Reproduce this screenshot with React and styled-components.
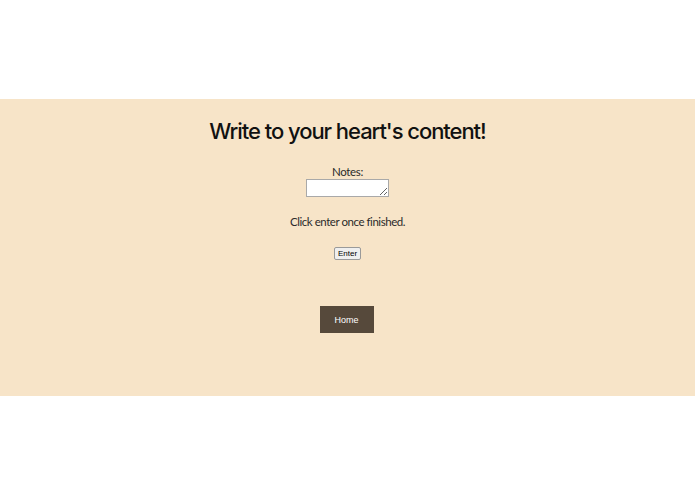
import React from "react";
import styled, { createGlobalStyle } from "styled-components";

const Global = createGlobalStyle`
  html, body { margin: 0; padding: 0; background: #ffffff; }
  body { font-family: "Lato", "Open Sans", sans-serif; }
`;

const Page = styled.div`
  padding-top: 99px;
`;

const Band = styled.section`
  background: #f7e4c8;
  height: 297px;
  display: flex;
  flex-direction: column;
  align-items: center;
  color: #1a1a1a;
`;

const Title = styled.h1`
  margin: 17px 0 0;
  font-family: "Inter", "Lato", sans-serif;
  font-weight: 500;
  font-size: 22px;
  letter-spacing: -1.05px;
  line-height: 30px;
  color: #111;
`;

const Label = styled.label`
  margin-top: 19px;
  font-size: 11.5px;
  letter-spacing: -0.3px;
  line-height: 14px;
  color: #2a2a2a;
`;

const Area = styled.textarea`
  margin-top: 0;
  width: 79px;
  height: 14px;
  padding: 1px;
  border: 1px solid #a9a9a9;
  background: #fff;
  font-size: 11px;
`;

const Hint = styled.p`
  margin: 18px 0 0;
  font-size: 11.5px;
  letter-spacing: -0.45px;
  line-height: 14px;
  color: #2a2a2a;
`;

const SmallButton = styled.button`
  margin-top: 18px;
  font-family: "Liberation Sans", Arial, sans-serif;
  font-size: 8px;
  padding: 1px 3px;
  border: 1px solid #9a9a9a;
  border-radius: 2px;
  background: #efefef;
  color: #000;
`;

const HomeButton = styled.button`
  margin-top: 46px;
  margin-left: -2px;
  width: 54px;
  height: 27px;
  background: #56493b;
  color: #fff;
  border: none;
  font-family: "Liberation Sans", Arial, sans-serif;
  font-size: 9px;
`;

export default function App() {
  return (
    <>
      <Global />
      <Page>
        <Band>
          <Title>Write to your heart's content!</Title>
          <Label htmlFor="notes">Notes:</Label>
          <Area id="notes" />
          <Hint>Click enter once finished.</Hint>
          <SmallButton>Enter</SmallButton>
          <HomeButton>Home</HomeButton>
        </Band>
      </Page>
    </>
  );
}
